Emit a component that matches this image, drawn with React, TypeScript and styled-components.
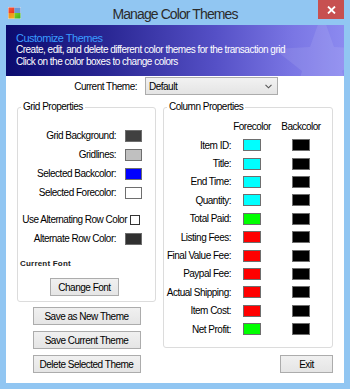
import { createGlobalStyle, styled } from "styled-components";

type Swatch = { label: string; color: string };

const gridRows: Swatch[] = [
  { label: "Grid Background:", color: "#404040" },
  { label: "Gridlines:", color: "#c0c0c0" },
  { label: "Selected Backcolor:", color: "#0000ff" },
  { label: "Selected Forecolor:", color: "#ffffff" },
];

const CYAN = "#00ffff";
const GREEN = "#00ff00";
const RED = "#ff0000";

const columnRows: { label: string; fore: string; back: string }[] = [
  { label: "Item ID:", fore: CYAN, back: "#000" },
  { label: "Title:", fore: CYAN, back: "#000" },
  { label: "End Time:", fore: CYAN, back: "#000" },
  { label: "Quantity:", fore: CYAN, back: "#000" },
  { label: "Total Paid:", fore: GREEN, back: "#000" },
  { label: "Listing Fees:", fore: RED, back: "#000" },
  { label: "Final Value Fee:", fore: RED, back: "#000" },
  { label: "Paypal Fee:", fore: RED, back: "#000" },
  { label: "Actual Shipping:", fore: RED, back: "#000" },
  { label: "Item Cost:", fore: RED, back: "#000" },
  { label: "Net Profit:", fore: GREEN, back: "#000" },
];

export default function App() {
  return (
    <>
      <GlobalStyle />
      <SWindow>
        <STitleBar>
          <SIconCell>
            <AppIcon />
          </SIconCell>
          <STitle>Manage Color Themes</STitle>
          <SClose>
            <svg width="9" height="8" viewBox="0 0 9 8">
              <path d="M1 0.5 L8 7.5 M8 0.5 L1 7.5" stroke="#fff" strokeWidth="1.8" />
            </svg>
          </SClose>
        </STitleBar>
        <SClient>
          <SBanner>
            <SStar viewBox="0 0 100 100">
              <polygon
                points="50,2 62,36 98,38 70,60 80,96 50,75 20,96 30,60 2,38 38,36"
                fill="#ffffff"
                opacity="0.09"
              />
            </SStar>
            <SBannerTitle>Customize Themes</SBannerTitle>
            <SBannerLine>
              Create, edit, and delete different color themes for the transaction grid
            </SBannerLine>
            <SBannerLine>Click on the color boxes to change colors</SBannerLine>
          </SBanner>
          <SMain>
            <SThemeRow>
              <SThemeLabel>Current Theme:</SThemeLabel>
              <SSelect>
                <span>Default</span>
                <svg width="7" height="5" viewBox="0 0 7 5">
                  <path d="M0.5 0.8 L3.5 3.8 L6.5 0.8" stroke="#555" strokeWidth="1.1" fill="none" />
                </svg>
              </SSelect>
            </SThemeRow>
            <SColumns>
              <SLeftCol>
                <SGridGroup>
                  <SLegend>Grid Properties</SLegend>
                  {gridRows.map((row) => (
                    <SPropRow key={row.label}>
                      <span>{row.label}</span>
                      <SSwatch $color={row.color} $w={17} />
                    </SPropRow>
                  ))}
                  <SPropRow $top={8} $check>
                    <span>Use Alternating Row Color</span>
                    <SCheck />
                  </SPropRow>
                  <SPropRow>
                    <span>Alternate Row Color:</span>
                    <SSwatch $color="#303030" $w={17} />
                  </SPropRow>
                  <SFontCaption>Current Font</SFontCaption>
                  <SButton $w={69} $left={32} $top={8}>
                    Change Font
                  </SButton>
                </SGridGroup>
                <SButtonStack>
                  <SButton $w={108}>Save as New Theme</SButton>
                  <SButton $w={108}>Save Current Theme</SButton>
                  <SButton $w={108}>Delete Selected Theme</SButton>
                </SButtonStack>
              </SLeftCol>
              <SRightCol>
                <SColumnGroup>
                  <SLegend>Column Properties</SLegend>
                  <SColorGrid>
                    <SHead $col={3}>Forecolor</SHead>
                    <SHead $col={5}>Backcolor</SHead>
                    {columnRows.map((row, index) => (
                      <SGridRow key={row.label}>
                        <SColLabel $row={index + 2}>{row.label}</SColLabel>
                        <SCell $col={3} $row={index + 2}>
                          <SSwatch $color={row.fore} $w={18} />
                        </SCell>
                        <SCell $col={5} $row={index + 2}>
                          <SSwatch $color={row.back} $w={18} />
                        </SCell>
                      </SGridRow>
                    ))}
                  </SColorGrid>
                </SColumnGroup>
                <SExit>
                  <SButton $w={53}>Exit</SButton>
                </SExit>
              </SRightCol>
            </SColumns>
          </SMain>
        </SClient>
      </SWindow>
    </>
  );
}

function AppIcon() {
  return (
    <svg width="13" height="12" viewBox="0 0 13 12">
      <defs>
        <linearGradient id="tl" x1="0" y1="0" x2="1" y2="1">
          <stop offset="0" stopColor="#f65a3c" />
          <stop offset="1" stopColor="#e8321e" />
        </linearGradient>
        <linearGradient id="bl" x1="0" y1="0" x2="1" y2="1">
          <stop offset="0" stopColor="#f08a1c" />
          <stop offset="1" stopColor="#f4b21a" />
        </linearGradient>
        <linearGradient id="br" x1="0" y1="0" x2="1" y2="1">
          <stop offset="0" stopColor="#8ad11c" />
          <stop offset="1" stopColor="#2fb12a" />
        </linearGradient>
      </defs>
      <rect x="0" y="0" width="13" height="12" fill="#d8e6f2" />
      <rect x="0.5" y="0.5" width="6" height="5.5" fill="url(#tl)" />
      <rect x="6.5" y="0.5" width="6" height="5.5" fill="#6a9ad8" />
      <rect x="0.5" y="6" width="6" height="5.5" fill="url(#bl)" />
      <rect x="6.5" y="6" width="6" height="5.5" fill="url(#br)" />
    </svg>
  );
}

const GlobalStyle = createGlobalStyle`
  html, body {
    margin: 0;
    padding: 0;
  }
  body {
    font-family: "Liberation Sans", Arial, sans-serif;
    font-size: 10px;
    color: #000;
  }
`;

const SWindow = styled.div`
  width: 350px;
  height: 389px;
  background: #91c6f2;
  display: flex;
  flex-direction: column;
  overflow: hidden;
`;

const STitleBar = styled.div`
  height: 25px;
  display: grid;
  grid-template-columns: 44px 1fr 44px;
  flex-shrink: 0;
`;

const SIconCell = styled.div`
  padding: 7px 0 0 8px;
`;

const STitle = styled.div`
  text-align: center;
  font-size: 14px;
  letter-spacing: -0.9px;
  color: #2b2b2b;
  padding-top: 5px;
  line-height: 18px;
`;

const SClose = styled.div`
  justify-self: end;
  margin-right: 6px;
  width: 26px;
  height: 19px;
  background: #c75050;
  display: flex;
  align-items: center;
  justify-content: center;
`;

const SClient = styled.div`
  flex: 1;
  margin: 0 6px 6px;
  background: #fff;
  display: flex;
  flex-direction: column;
`;

const SBanner = styled.div`
  position: relative;
  overflow: hidden;
  height: 51px;
  box-sizing: border-box;
  padding: 7px 0 0 10px;
  background: linear-gradient(
    to right,
    #0b0b6e 0%,
    #2a2794 30%,
    #5550c6 62%,
    #7a76e4 85%,
    #8c8af0 100%
  );
`;

const SStar = styled.svg`
  position: absolute;
  right: -28px;
  top: -14px;
  width: 100px;
  height: 100px;
`;

const SBannerTitle = styled.div`
  position: relative;
  font-size: 11px;
  letter-spacing: -0.5px;
  line-height: 12px;
  color: #3a9cff;
`;

const SBannerLine = styled.div`
  position: relative;
  font-size: 10px;
  letter-spacing: -0.5px;
  line-height: 11.5px;
  color: #fff;
  white-space: nowrap;
`;

const SMain = styled.div`
  padding: 1px 11px 0;
  display: flex;
  flex-direction: column;
`;

const SThemeRow = styled.div`
  height: 18px;
  display: flex;
  align-items: center;
`;

const SThemeLabel = styled.span`
  width: 120px;
  margin-right: 8px;
  text-align: right;
  letter-spacing: -0.5px;
`;

const SSelect = styled.div`
  width: 133px;
  height: 18px;
  box-sizing: border-box;
  border: 1px solid #acacac;
  background: linear-gradient(#f2f2f2, #e4e4e4);
  display: flex;
  align-items: center;
  justify-content: space-between;
  padding: 0 5px 0 3px;
  letter-spacing: -0.5px;
`;

const SColumns = styled.div`
  margin-top: 6px;
  display: flex;
  gap: 7px;
  align-items: flex-start;
`;

const SLeftCol = styled.div`
  width: 139px;
  display: flex;
  flex-direction: column;
`;

const SRightCol = styled.div`
  width: 170px;
  display: flex;
  flex-direction: column;
`;

const SGroup = styled.fieldset`
  margin: 0;
  border: 1px solid #dcdcdc;
  border-radius: 3px;
  min-width: 0;
  display: flex;
  flex-direction: column;
`;

const SGridGroup = styled(SGroup)`
  padding: 13px 0 5px;
`;

const SColumnGroup = styled(SGroup)`
  padding: 4px 0 9px;
`;

const SLegend = styled.legend`
  font-size: 10px;
  line-height: 12px;
  letter-spacing: -0.5px;
  padding: 0 2px;
  margin-left: 3px;
`;

const SPropRow = styled.div<{ $top?: number; $check?: boolean }>`
  height: 19px;
  margin-top: ${({ $top }) => $top || 0}px;
  display: flex;
  align-items: center;
  justify-content: flex-end;
  gap: ${({ $check }) => ($check ? 3 : 9)}px;
  padding-right: ${({ $check }) => ($check ? 15 : 13)}px;
  letter-spacing: -0.5px;
  white-space: nowrap;
`;

const SSwatch = styled.div<{ $color: string; $w: number }>`
  width: ${({ $w }) => $w}px;
  height: 12px;
  box-sizing: border-box;
  border: 1px solid #6e6e6e;
  background: ${({ $color }) => $color};
  flex-shrink: 0;
`;

const SCheck = styled.div`
  width: 10px;
  height: 10px;
  box-sizing: border-box;
  border: 1px solid #333;
  background: #fff;
`;

const SFontCaption = styled.div`
  margin-top: 10px;
  height: 12px;
  line-height: 12px;
  padding-left: 2px;
  font-size: 8px;
  font-weight: bold;
  letter-spacing: 0.2px;
  color: #222;
`;

const SButton = styled.button<{ $w: number; $left?: number; $top?: number }>`
  width: ${({ $w }) => $w}px;
  height: 18px;
  margin: ${({ $top }) => $top || 0}px 0 0 ${({ $left }) => $left || 0}px;
  align-self: flex-start;
  padding: 0;
  box-sizing: border-box;
  border: 1px solid #acacac;
  border-radius: 0;
  background: linear-gradient(#f0f0f0, #e5e5e5);
  font-family: "Liberation Sans", Arial, sans-serif;
  font-size: 10px;
  letter-spacing: -0.5px;
  color: #000;
  white-space: nowrap;
`;

const SButtonStack = styled.div`
  margin-top: 5px;
  display: flex;
  flex-direction: column;
  align-items: center;
  gap: 6px;

  > button {
    align-self: center;
  }
`;

const SColorGrid = styled.div`
  display: grid;
  grid-template-columns: 67px 12px 18px 31px 18px;
  grid-template-rows: 19px;
  grid-auto-rows: 18.4px;
  align-items: center;
  letter-spacing: -0.5px;
  white-space: nowrap;
`;

const SGridRow = styled.div`
  display: contents;
`;

const SHead = styled.span<{ $col: number }>`
  grid-row: 1;
  grid-column: ${({ $col }) => $col};
  justify-self: center;
`;

const SCell = styled.div<{ $col: number; $row: number }>`
  grid-row: ${({ $row }) => $row};
  grid-column: ${({ $col }) => $col};
  display: flex;
`;

const SColLabel = styled.span<{ $row: number }>`
  grid-row: ${({ $row }) => $row};
  grid-column: 1;
  text-align: right;
`;

const SExit = styled.div`
  margin-top: 7px;
  display: flex;
  justify-content: flex-end;
`;
